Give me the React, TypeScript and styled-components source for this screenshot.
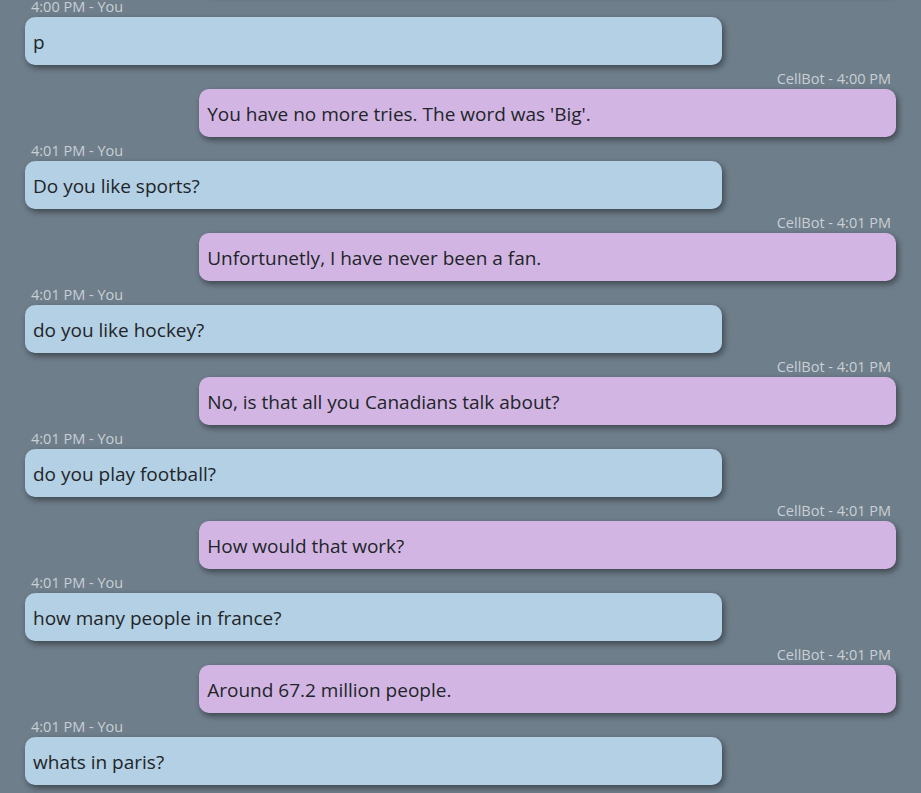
import React from "react";
import styled, { createGlobalStyle } from "styled-components";

const Global = createGlobalStyle`
  html, body { margin: 0; padding: 0; height: 100%; }
  body {
    background: #6e7e8b;
    font-family: "Open Sans", "Noto Sans", "Liberation Sans", sans-serif;
    overflow: hidden;
  }
`;

const Viewport = styled.div`
  height: 793px;
  overflow: hidden;
  display: flex;
  flex-direction: column;
  justify-content: flex-end;
`;

const Log = styled.div`
  display: flex;
  flex-direction: column;
  padding: 0 25px 8px 25px;
  flex-shrink: 0;
`;

const Message = styled.div<{ $bot?: boolean }>`
  display: flex;
  flex-direction: column;
  align-items: ${(p) => (p.$bot ? "flex-end" : "flex-start")};
`;

const Meta = styled.div<{ $bot?: boolean }>`
  font-size: 14.5px;
  line-height: 19px;
  color: #c9cfd5;
  padding: 0 ${(p) => (p.$bot ? "5px" : "0")} 0 ${(p) => (p.$bot ? "0" : "6px")};
  margin: 4px 0 1px;
`;

const Bubble = styled.div<{ $bot?: boolean }>`
  box-sizing: border-box;
  width: 80%;
  height: 48px;
  display: flex;
  align-items: center;
  padding: 2px 8px 0 8px;
  border-radius: 10px;
  background: ${(p) => (p.$bot ? "#d3b5e4" : "#b4d0e4")};
  color: #212529;
  font-size: 19px;
  box-shadow: 2px 3px 6px rgba(0, 0, 0, 0.45);
`;

type Msg = { bot: boolean; time: string; text: string };

const messages: Msg[] = [
  { bot: true, time: "4:00 PM", text: "Incorrect. You have 1 try left." },
  { bot: false, time: "4:00 PM", text: "p" },
  { bot: true, time: "4:00 PM", text: "You have no more tries. The word was 'Big'." },
  { bot: false, time: "4:01 PM", text: "Do you like sports?" },
  { bot: true, time: "4:01 PM", text: "Unfortunetly, I have never been a fan." },
  { bot: false, time: "4:01 PM", text: "do you like hockey?" },
  { bot: true, time: "4:01 PM", text: "No, is that all you Canadians talk about?" },
  { bot: false, time: "4:01 PM", text: "do you play football?" },
  { bot: true, time: "4:01 PM", text: "How would that work?" },
  { bot: false, time: "4:01 PM", text: "how many people in france?" },
  { bot: true, time: "4:01 PM", text: "Around 67.2 million people." },
  { bot: false, time: "4:01 PM", text: "whats in paris?" },
];

export default function App() {
  return (
    <>
      <Global />
      <Viewport>
        <Log>
          {messages.map((m, i) => (
            <Message key={i} $bot={m.bot}>
              <Meta $bot={m.bot}>{m.bot ? `CellBot - ${m.time}` : `${m.time} - You`}</Meta>
              <Bubble $bot={m.bot}>{m.text}</Bubble>
            </Message>
          ))}
        </Log>
      </Viewport>
    </>
  );
}
